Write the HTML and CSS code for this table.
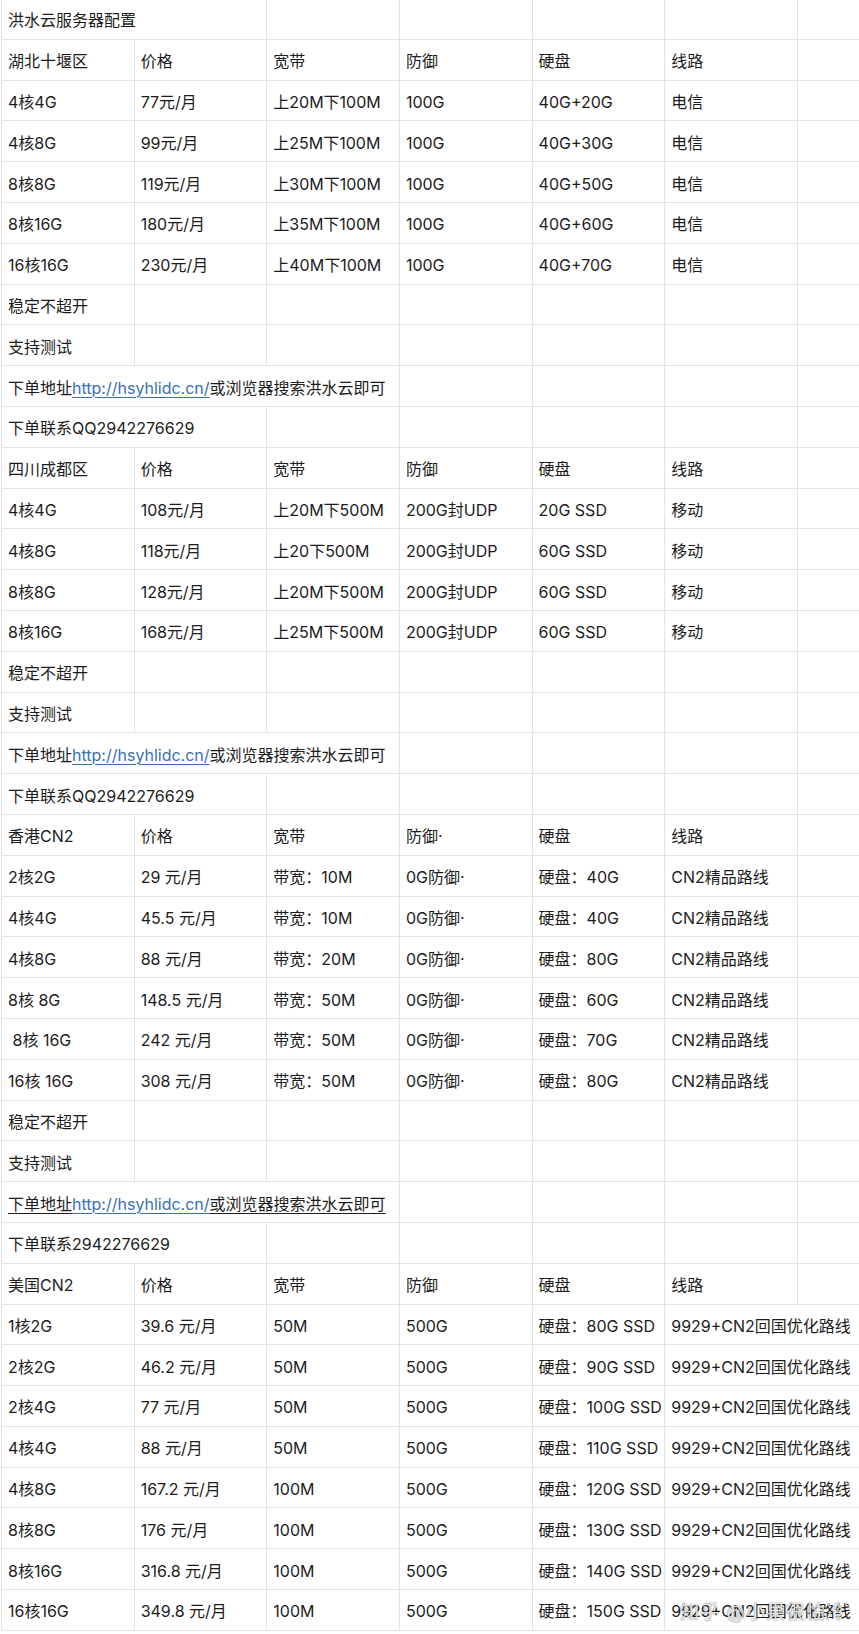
FILE: index.html
```html
<!DOCTYPE html>
<html lang="zh-CN">
<head>
<meta charset="utf-8">
<title>洪水云服务器配置</title>
<link rel="stylesheet" href="styles.css">
</head>
<body>
<div class="sheet">
  <div class="c s2">洪水云服务器配置</div><div class="c"></div><div class="c"></div><div class="c"></div><div class="c"></div><div class="c end"></div>

  <div class="c">湖北十堰区</div><div class="c">价格</div><div class="c">宽带</div><div class="c">防御</div><div class="c">硬盘</div><div class="c">线路</div><div class="c end"></div>
  <div class="c">4核4G</div><div class="c">77元/月</div><div class="c">上20M下100M</div><div class="c">100G</div><div class="c">40G+20G</div><div class="c">电信</div><div class="c end"></div>
  <div class="c">4核8G</div><div class="c">99元/月</div><div class="c">上25M下100M</div><div class="c">100G</div><div class="c">40G+30G</div><div class="c">电信</div><div class="c end"></div>
  <div class="c">8核8G</div><div class="c">119元/月</div><div class="c">上30M下100M</div><div class="c">100G</div><div class="c">40G+50G</div><div class="c">电信</div><div class="c end"></div>
  <div class="c">8核16G</div><div class="c">180元/月</div><div class="c">上35M下100M</div><div class="c">100G</div><div class="c">40G+60G</div><div class="c">电信</div><div class="c end"></div>
  <div class="c">16核16G</div><div class="c">230元/月</div><div class="c">上40M下100M</div><div class="c">100G</div><div class="c">40G+70G</div><div class="c">电信</div><div class="c end"></div>
  <div class="c">稳定不超开</div><div class="c"></div><div class="c"></div><div class="c"></div><div class="c"></div><div class="c"></div><div class="c end"></div>
  <div class="c">支持测试</div><div class="c"></div><div class="c"></div><div class="c"></div><div class="c"></div><div class="c"></div><div class="c end"></div>
  <div class="c s3">下单地址<a class="link" href="#">http://hsyhlidc.cn/</a>或浏览器搜索洪水云即可</div><div class="c"></div><div class="c"></div><div class="c"></div><div class="c end"></div>
  <div class="c s2">下单联系QQ2942276629</div><div class="c"></div><div class="c"></div><div class="c"></div><div class="c"></div><div class="c end"></div>

  <div class="c">四川成都区</div><div class="c">价格</div><div class="c">宽带</div><div class="c">防御</div><div class="c">硬盘</div><div class="c">线路</div><div class="c end"></div>
  <div class="c">4核4G</div><div class="c">108元/月</div><div class="c">上20M下500M</div><div class="c">200G封UDP</div><div class="c">20G SSD</div><div class="c">移动</div><div class="c end"></div>
  <div class="c">4核8G</div><div class="c">118元/月</div><div class="c">上20下500M</div><div class="c">200G封UDP</div><div class="c">60G SSD</div><div class="c">移动</div><div class="c end"></div>
  <div class="c">8核8G</div><div class="c">128元/月</div><div class="c">上20M下500M</div><div class="c">200G封UDP</div><div class="c">60G SSD</div><div class="c">移动</div><div class="c end"></div>
  <div class="c">8核16G</div><div class="c">168元/月</div><div class="c">上25M下500M</div><div class="c">200G封UDP</div><div class="c">60G SSD</div><div class="c">移动</div><div class="c end"></div>
  <div class="c">稳定不超开</div><div class="c"></div><div class="c"></div><div class="c"></div><div class="c"></div><div class="c"></div><div class="c end"></div>
  <div class="c">支持测试</div><div class="c"></div><div class="c"></div><div class="c"></div><div class="c"></div><div class="c"></div><div class="c end"></div>
  <div class="c s3">下单地址<a class="link" href="#">http://hsyhlidc.cn/</a>或浏览器搜索洪水云即可</div><div class="c"></div><div class="c"></div><div class="c"></div><div class="c end"></div>
  <div class="c s2">下单联系QQ2942276629</div><div class="c"></div><div class="c"></div><div class="c"></div><div class="c"></div><div class="c end"></div>

  <div class="c">香港CN2</div><div class="c">价格</div><div class="c">宽带</div><div class="c">防御·</div><div class="c">硬盘</div><div class="c">线路</div><div class="c end"></div>
  <div class="c">2核2G</div><div class="c">29 元/月</div><div class="c">带宽：10M</div><div class="c">0G防御·</div><div class="c">硬盘：40G</div><div class="c">CN2精品路线</div><div class="c end"></div>
  <div class="c">4核4G</div><div class="c">45.5 元/月</div><div class="c">带宽：10M</div><div class="c">0G防御·</div><div class="c">硬盘：40G</div><div class="c">CN2精品路线</div><div class="c end"></div>
  <div class="c">4核8G</div><div class="c">88 元/月</div><div class="c">带宽：20M</div><div class="c">0G防御·</div><div class="c">硬盘：80G</div><div class="c">CN2精品路线</div><div class="c end"></div>
  <div class="c">8核 8G</div><div class="c">148.5 元/月</div><div class="c">带宽：50M</div><div class="c">0G防御·</div><div class="c">硬盘：60G</div><div class="c">CN2精品路线</div><div class="c end"></div>
  <div class="c">&nbsp;8核 16G</div><div class="c">242 元/月</div><div class="c">带宽：50M</div><div class="c">0G防御·</div><div class="c">硬盘：70G</div><div class="c">CN2精品路线</div><div class="c end"></div>
  <div class="c">16核 16G</div><div class="c">308 元/月</div><div class="c">带宽：50M</div><div class="c">0G防御·</div><div class="c">硬盘：80G</div><div class="c">CN2精品路线</div><div class="c end"></div>
  <div class="c">稳定不超开</div><div class="c"></div><div class="c"></div><div class="c"></div><div class="c"></div><div class="c"></div><div class="c end"></div>
  <div class="c">支持测试</div><div class="c"></div><div class="c"></div><div class="c"></div><div class="c"></div><div class="c"></div><div class="c end"></div>
  <div class="c s3"><span class="ul">下单地址<a class="link" href="#">http://hsyhlidc.cn/</a>或浏览器搜索洪水云即可</span></div><div class="c"></div><div class="c"></div><div class="c"></div><div class="c end"></div>
  <div class="c s2">下单联系2942276629</div><div class="c"></div><div class="c"></div><div class="c"></div><div class="c"></div><div class="c end"></div>

  <div class="c">美国CN2</div><div class="c">价格</div><div class="c">宽带</div><div class="c">防御</div><div class="c">硬盘</div><div class="c">线路</div><div class="c end"></div>
  <div class="c">1核2G</div><div class="c">39.6 元/月</div><div class="c">50M</div><div class="c">500G</div><div class="c">硬盘：80G SSD</div><div class="c s2 end">9929+CN2回国优化路线</div>
  <div class="c">2核2G</div><div class="c">46.2 元/月</div><div class="c">50M</div><div class="c">500G</div><div class="c">硬盘：90G SSD</div><div class="c s2 end">9929+CN2回国优化路线</div>
  <div class="c">2核4G</div><div class="c">77 元/月</div><div class="c">50M</div><div class="c">500G</div><div class="c">硬盘：100G SSD</div><div class="c s2 end">9929+CN2回国优化路线</div>
  <div class="c">4核4G</div><div class="c">88 元/月</div><div class="c">50M</div><div class="c">500G</div><div class="c">硬盘：110G SSD</div><div class="c s2 end">9929+CN2回国优化路线</div>
  <div class="c">4核8G</div><div class="c">167.2 元/月</div><div class="c">100M</div><div class="c">500G</div><div class="c">硬盘：120G SSD</div><div class="c s2 end">9929+CN2回国优化路线</div>
  <div class="c">8核8G</div><div class="c">176 元/月</div><div class="c">100M</div><div class="c">500G</div><div class="c">硬盘：130G SSD</div><div class="c s2 end">9929+CN2回国优化路线</div>
  <div class="c">8核16G</div><div class="c">316.8 元/月</div><div class="c">100M</div><div class="c">500G</div><div class="c">硬盘：140G SSD</div><div class="c s2 end">9929+CN2回国优化路线</div>
  <div class="c">16核16G</div><div class="c">349.8 元/月</div><div class="c">100M</div><div class="c">500G</div><div class="c">硬盘：150G SSD</div><div class="c s2 end wm-host">9929+CN2回国优化路线<span class="watermark">知乎 @小果很怕冷</span></div>
</div>
</body>
</html>
```

FILE: styles.css
```css
html, body {
  margin: 0;
  padding: 0;
  background: #ffffff;
}

body {
  font-family: Inter, "Noto Sans CJK SC", sans-serif;
  font-size: 16px;
  color: #1c1c1c;
}

.sheet {
  display: grid;
  grid-template-columns: repeat(6, 132.65px) 1fr;
  grid-auto-rows: 40.8px;
  margin: -1px 0 0 1px;
  border-left: 1px solid #e4e4e4;
}

.c {
  box-sizing: border-box;
  border-right: 1px solid #e4e4e4;
  border-bottom: 1px solid #e4e4e4;
  padding: 3px 0 0 6px;
  display: flex;
  align-items: center;
  white-space: pre;
  overflow: hidden;
  line-height: 20px;
}

.end {
  border-right: none;
}

.s2 {
  grid-column: span 2;
}

.s3 {
  grid-column: span 3;
}

.link {
  color: #3a6fae;
  text-decoration: underline;
  text-underline-offset: 3px;
  text-decoration-thickness: 1px;
}

.ul {
  text-decoration: underline;
  text-underline-offset: 3px;
  text-decoration-thickness: 1px;
}

.wm-host {
  position: relative;
  overflow: visible;
}

.watermark {
  position: absolute;
  left: 15px;
  top: 12px;
  z-index: 2;
  font-size: 19px;
  line-height: 22px;
  color: rgba(255, 255, 255, 0.85);
  text-shadow: 0 0 1px rgba(0, 0, 0, 0.55), 0 0 2px rgba(0, 0, 0, 0.25);
  letter-spacing: 1px;
  pointer-events: none;
}
```
